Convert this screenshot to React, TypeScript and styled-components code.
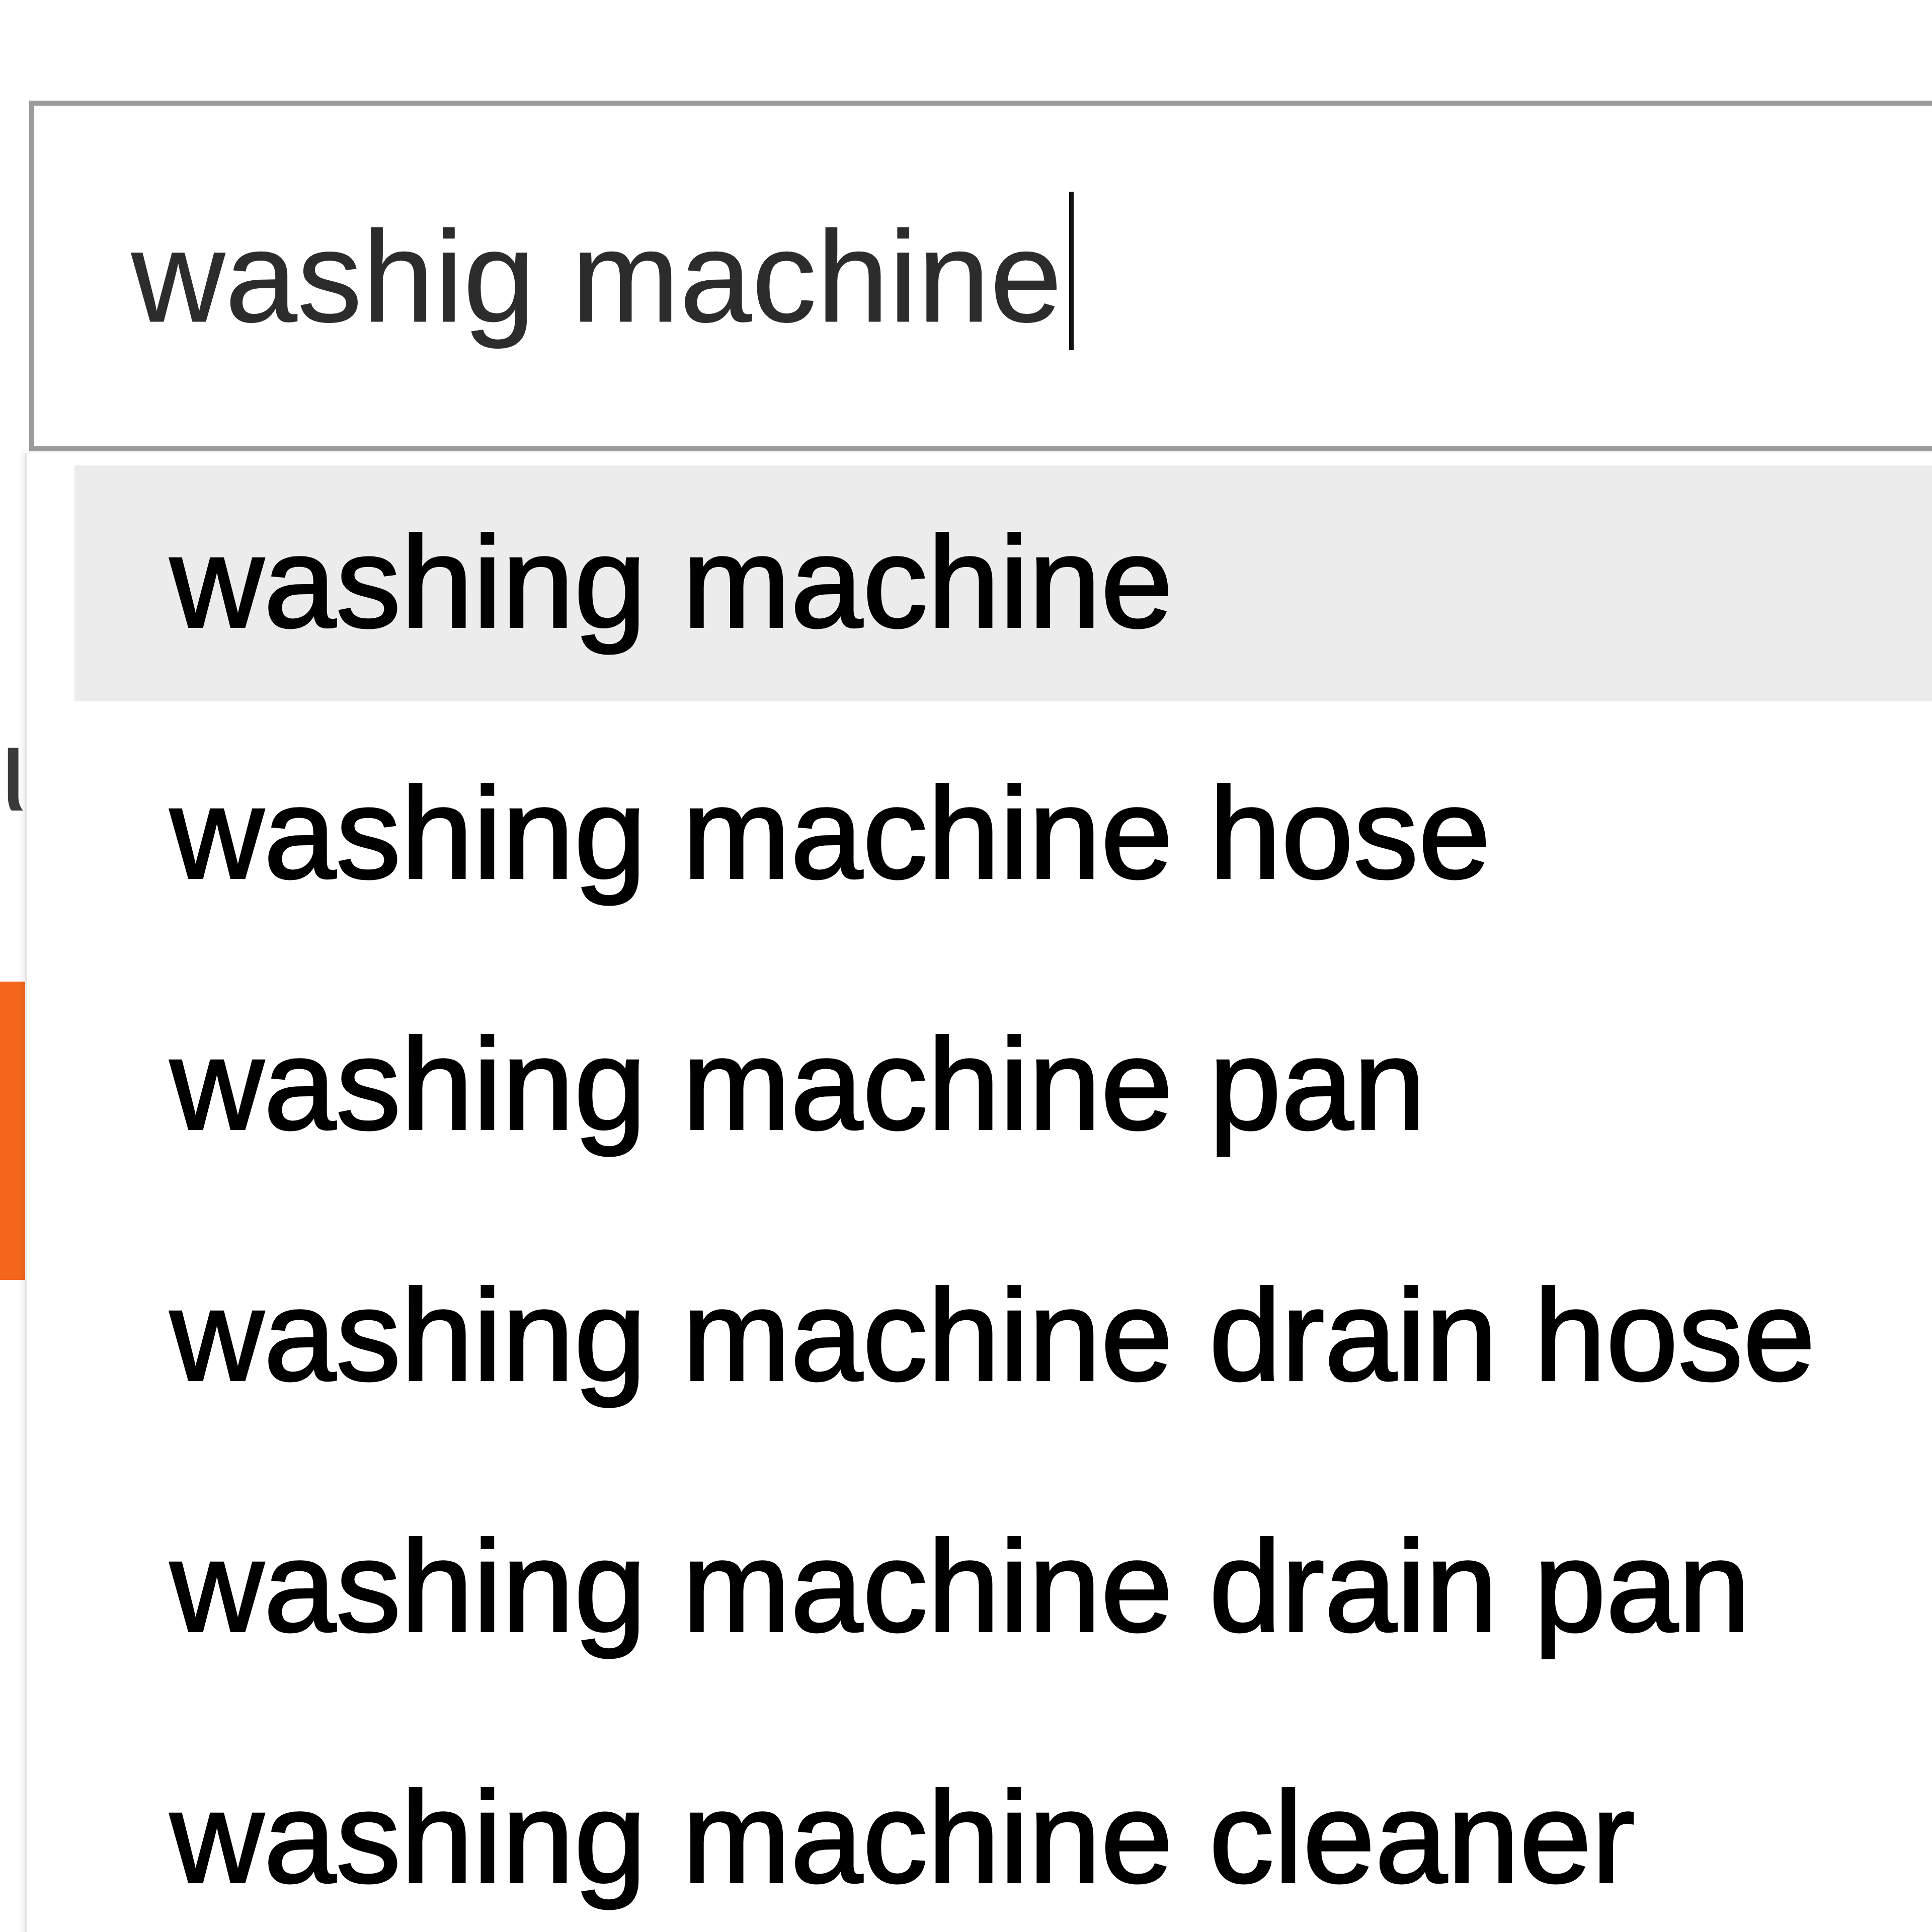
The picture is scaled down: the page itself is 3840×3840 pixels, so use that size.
import styled, { createGlobalStyle } from 'styled-components';

const GlobalStyle = createGlobalStyle`
  html, body {
    margin: 0;
    padding: 0;
    background: #ffffff;
  }
`;

const Page = styled.div`
  width: 3840px;
  height: 3840px;
  box-sizing: border-box;
  padding-top: 200px;
  overflow: hidden;
  display: flex;
  flex-direction: column;
  background: #ffffff;
  font-family: 'Liberation Sans', Arial, Helvetica, sans-serif;
`;

const SearchField = styled.div`
  flex: none;
  box-sizing: border-box;
  height: 697px;
  margin-left: 58px;
  margin-right: -300px;
  border: 10px solid #9b9b9b;
  padding: 196px 0 0 193px;
  background: #ffffff;
`;

const FieldText = styled.div`
  font-size: 258px;
  line-height: 288px;
  color: #2c2c2c;
  white-space: nowrap;
  -webkit-text-stroke: 1px #2c2c2c;
`;

const Caret = styled.span`
  display: inline-block;
  width: 9px;
  height: 315px;
  margin: -30px 0 -10px 14px;
  vertical-align: -47px;
  background: #111111;
`;

const Content = styled.div`
  position: relative;
  flex: 1;
`;

// page content that sits behind the suggestion menu
const Backdrop = styled.div`
  display: flex;
  flex-direction: column;
  align-items: flex-start;
`;

const StrayGlyph = styled.span`
  margin-top: 512px;
  font-size: 236px;
  line-height: 240px;
  color: #3a3a3a;
`;

const OrangeButton = styled.div`
  margin-top: 302px;
  width: 53px;
  height: 593px;
  background: #f4661c;
`;

const Suggestions = styled.ul`
  position: absolute;
  top: 3px;
  left: 50px;
  right: -300px;
  bottom: -300px;
  margin: 0;
  padding: 25px 0 0 94px;
  list-style: none;
  display: flex;
  flex-direction: column;
  gap: 30px;
  background: #ffffff;
  border-left: 4px solid #e6e6e6;
  box-shadow: -6px 0 10px rgba(0, 0, 0, 0.07);
`;

const Suggestion = styled.li<{ active?: boolean }>`
  box-sizing: border-box;
  height: 469px;
  padding: 88px 0 0 190px;
  font-size: 258px;
  line-height: 288px;
  color: #000000;
  white-space: nowrap;
  -webkit-text-stroke: 4px #000000;
  background: ${(p) => (p.active ? '#ececec' : 'transparent')};
`;

const suggestions = [
  'washing machine',
  'washing machine hose',
  'washing machine pan',
  'washing machine drain hose',
  'washing machine drain pan',
  'washing machine cleaner'
];

export default function App() {
  return (
    <>
      <GlobalStyle />
      <Page>
        <SearchField>
          <FieldText>
            washig machine
            <Caret />
          </FieldText>
        </SearchField>
        <Content>
          <Backdrop>
            <StrayGlyph>ι</StrayGlyph>
            <OrangeButton />
          </Backdrop>
          <Suggestions>
            {suggestions.map((s, i) => (
              <Suggestion key={s} active={i === 0}>
                {s}
              </Suggestion>
            ))}
          </Suggestions>
        </Content>
      </Page>
    </>
  );
}
